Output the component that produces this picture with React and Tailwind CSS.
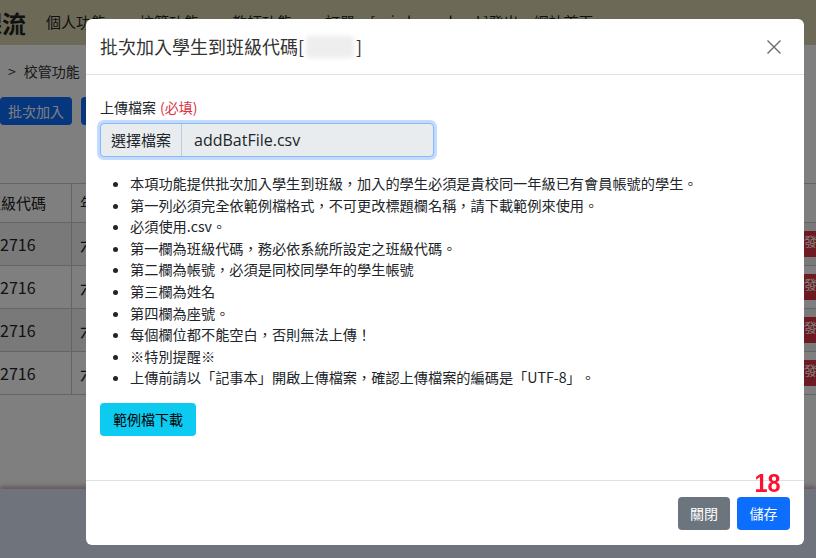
import { ChevronDown } from 'lucide-react';

const cjk = { fontFamily: '"Noto Sans CJK TC", "Noto Sans", sans-serif' };

const rules = [
  '本項功能提供批次加入學生到班級，加入的學生必須是貴校同一年級已有會員帳號的學生。',
  '第一列必須完全依範例檔格式，不可更改標題欄名稱，請下載範例來使用。',
  '必須使用.csv。',
  '第一欄為班級代碼，務必依系統所設定之班級代碼。',
  '第二欄為帳號，必須是同校同學年的學生帳號',
  '第三欄為姓名',
  '第四欄為座號。',
  '每個欄位都不能空白，否則無法上傳！',
  '※特別提醒※',
  '上傳前請以「記事本」開啟上傳檔案，確認上傳檔案的編碼是「UTF-8」。',
];

function Page() {
  const rows = ['2716', '2716', '2716', '2716'];
  return (
    <div className="w-[816px] h-[558px] bg-white overflow-hidden flex flex-col" style={cjk}>
      {/* navbar */}
      <div className="h-[45px] bg-[#d8d4ae] flex items-center gap-[15px] text-[15px] text-[#222] shrink-0">
        <span className="text-[24px] font-bold -ml-[22px] mr-[5px]">課流</span>
        <span className="flex items-center gap-1">個人功能<ChevronDown size={14} /></span>
        <span className="flex items-center gap-1">校管功能<ChevronDown size={14} /></span>
        <span className="flex items-center gap-1">教師功能<ChevronDown size={14} /></span>
        <span>訂單</span>
        <span>[ wisdomschool ]登出</span>
        <span>網站首頁</span>
      </div>
      {/* breadcrumb */}
      <div className="h-[52px] flex items-center gap-2 pl-[8px] text-[14px] text-[#333]">
        <span>&gt;</span><span>校管功能</span><span>&gt;</span>
      </div>
      <div className="flex gap-[9px] h-[28px] shrink-0">
        <div className="bg-[#0d6efd] text-white text-[14px] rounded px-[8px] flex items-center">批次加入</div>
        <div className="bg-[#0d6efd] text-white text-[14px] rounded px-[8px] flex items-center">批次刪除</div>
      </div>
      <div className="h-[58px] shrink-0" />
      <div className="border-t border-[#c8c8c8] flex-1 flex flex-col">
        <div className="h-[39px] flex border-b border-[#c8c8c8] text-[15px] text-[#222]">
          <div className="w-[72px] border-r border-[#c8c8c8] flex items-center overflow-hidden">
            <span className="shrink-0 -ml-[14px]">班級代碼</span>
          </div>
          <div className="flex items-center pl-[8px]">年級</div>
        </div>
        {rows.map((r, i) => (
          <div key={i} className={`h-[43px] flex border-b border-[#c8c8c8] text-[16px] text-[#222] ${i % 2 === 0 ? 'bg-[#f2f2f2]' : 'bg-white'}`}>
            <div className="w-[72px] border-r border-[#c8c8c8] flex items-center">{r}</div>
            <div className="flex-1 flex items-center pl-[8px]">六</div>
            <div className="w-[12px] h-[26px] self-center bg-[#dc3545] text-white text-[13px] overflow-hidden">發</div>
          </div>
        ))}
        <div className="flex-1" />
        <div className="h-[69px] bg-[#dee9f8] shadow-[0_-3px_4px_rgba(120,40,60,0.35)]" />
      </div>
    </div>
  );
}

function Modal() {
  return (
    <div className="ml-[86px] mt-[19px] w-[718px] bg-white rounded-[6px] text-[#212529] relative [text-spacing-trim:space-all]" style={cjk}>
      <div className="h-[56px] flex items-center justify-between px-[14px] border-b border-[#dee2e6]">
        <h5 className="text-[18px] text-[#333] flex items-center">
          批次加入學生到班級代碼[
          <span className="inline-block w-[48px] h-[22px] bg-[#eeeeee] rounded blur-[2px] mx-[2px]" />
          ]
        </h5>
        <svg width="16" height="16" viewBox="0 0 16 16" className="mr-[8px]">
          <path d="M1.5 1.5 L14.5 14.5 M14.5 1.5 L1.5 14.5" stroke="#6b6b6b" strokeWidth="1.4" />
        </svg>
      </div>
      <div className="px-[14px] pt-[22px] pb-[44px]">
        <div className="text-[14px] leading-[21px] mb-[5px] flex gap-[4px]">
          <span>上傳檔案</span><span className="text-[#dc3545]">(必填)</span>
        </div>
        <div className="w-[334px] h-[34px] flex rounded-[4px] border border-[#86b7fe] shadow-[0_0_0_3px_rgba(13,110,253,0.25)] bg-[#e9ecef] overflow-hidden">
          <div className="w-[81px] flex items-center justify-center border-r border-[#b9cde8] text-[15px] text-[#212529]">選擇檔案</div>
          <div className="flex items-center pl-[12px] text-[16px] text-[#212529]" style={{ fontFamily: '"Open Sans", "Noto Sans", sans-serif' }}>addBatFile.csv</div>
        </div>
        <ul className="mt-[16px] mb-[14px] pl-[30px] list-disc text-[14.2px] leading-[21.6px] text-[#212529]">
          {rules.map((t, i) => (
            <li key={i}>{t}</li>
          ))}
        </ul>
        <button className="h-[33px] w-[96px] bg-[#0dcaf0] text-black text-[14px] rounded-[4px]">範例檔下載</button>
      </div>
      <div className="border-t border-[#dee2e6] flex justify-end gap-[7px] px-[14px] pt-[16px] pb-[15px] relative">
        <button className="h-[33px] w-[52px] bg-[#6c757d] text-white text-[14px] rounded-[4px]">關閉</button>
        <button className="h-[33px] w-[53px] bg-[#0d6efd] text-white text-[14px] rounded-[4px]">儲存</button>
        <span className="absolute right-[22px] -top-[11px] text-[26px] leading-none font-bold text-[#ff1030] scale-x-90" style={{ fontFamily: '"Liberation Sans", sans-serif' }}>18</span>
      </div>
    </div>
  );
}

export default function App() {
  return (
    <div className="relative w-[816px] h-[558px] overflow-hidden">
      <Page />
      <div className="absolute inset-0 bg-black/50">
        <Modal />
      </div>
    </div>
  );
}
